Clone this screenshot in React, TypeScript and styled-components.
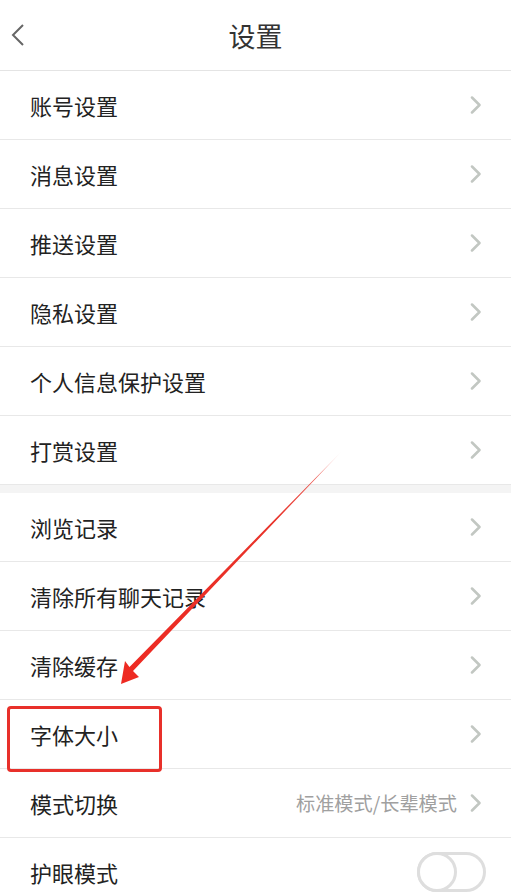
import styled, { createGlobalStyle } from 'styled-components';

const GlobalStyle = createGlobalStyle`
    html, body {
        margin: 0;
        padding: 0;
        background: #fff;
    }
    body {
        font-family: 'Noto Sans CJK SC', 'Noto Sans', sans-serif;
    }
`;

const Page = styled.div`
    position: relative;
    width: 511px;
    min-height: 896px;
    overflow: hidden;
    background: #fff;
`;

const Header = styled.div`
    height: 70px;
    display: flex;
    align-items: center;
    justify-content: center;
    position: relative;
    border-bottom: 1px solid #e4e4e4;
`;

const BackButton = styled.div`
    position: absolute;
    left: 8px;
    top: 21px;
    width: 20px;
    height: 28px;
    display: flex;
    align-items: center;
    justify-content: center;
`;

const HeaderTitleTypo = styled.div`
    color: #333;
    font-size: 27px;
    font-weight: 400;
    line-height: 34px;
    margin-top: 2px;
`;

const Group = styled.div`
    display: flex;
    flex-direction: column;
`;

const GroupGap = styled.div`
    height: 8px;
    background: #f4f4f4;
`;

const Row = styled.div`
    height: 68px;
    display: flex;
    align-items: center;
    justify-content: space-between;
    padding: 0 29px 0 30px;
    border-bottom: 1px solid #e8e8e8;
`;

const RowLabelTypo = styled.div`
    color: #222;
    font-size: 22px;
    font-weight: 400;
    line-height: 30px;
`;

const RowRightWrap = styled.div`
    display: flex;
    align-items: center;
    gap: 13px;
`;

const RowValueTypo = styled.div`
    color: #a0a0a0;
    font-size: 19.2px;
    font-weight: 400;
    line-height: 26px;
`;

const Toggle = styled.div<{ $on: boolean }>`
    width: 69px;
    height: 40px;
    box-sizing: border-box;
    margin-right: -4px;
    border-radius: 20px;
    border: 3px solid #dedede;
    background: ${(props) => (props.$on ? '#4cd964' : '#fff')};
    position: relative;
`;

const ToggleKnob = styled.div<{ $on: boolean }>`
    position: absolute;
    top: -3px;
    left: ${(props) => (props.$on ? '26px' : '-3px')};
    width: 40px;
    height: 40px;
    box-sizing: border-box;
    border-radius: 50%;
    border: 3px solid #dedede;
    background: #fff;
`;

const HighlightBox = styled.div`
    position: absolute;
    left: 7px;
    top: 706px;
    width: 155px;
    height: 66px;
    box-sizing: border-box;
    border: 3px solid #e8302a;
    border-radius: 4px;
    pointer-events: none;
`;

const ArrowLayer = styled.svg`
    position: absolute;
    left: 0;
    top: 0;
    pointer-events: none;
`;

const Chevron = () => (
    <svg width="12" height="18" viewBox="0 0 12 18">
        <path d="M2 1.5 L9.5 9 L2 16.5" fill="none" stroke="#c2c7c2" strokeWidth="2.5" strokeLinecap="round" strokeLinejoin="round" />
    </svg>
);

interface IRow {
    label: string;
    value?: string;
    toggle?: boolean;
}

const groupOne: IRow[] = [
    { label: '账号设置' },
    { label: '消息设置' },
    { label: '推送设置' },
    { label: '隐私设置' },
    { label: '个人信息保护设置' },
    { label: '打赏设置' }
];

const groupTwo: IRow[] = [
    { label: '浏览记录' },
    { label: '清除所有聊天记录' },
    { label: '清除缓存' },
    { label: '字体大小' },
    { label: '模式切换', value: '标准模式/长辈模式' },
    { label: '护眼模式', toggle: false }
];

const SettingRow = ({ item }: { item: IRow }) => (
    <Row>
        <RowLabelTypo>{item.label}</RowLabelTypo>
        {item.toggle !== undefined ? (
            <Toggle $on={item.toggle}>
                <ToggleKnob $on={item.toggle} />
            </Toggle>
        ) : (
            <RowRightWrap>
                {item.value && <RowValueTypo>{item.value}</RowValueTypo>}
                <Chevron />
            </RowRightWrap>
        )}
    </Row>
);

const App = () => {
    return (
        <Page>
            <GlobalStyle />
            <Header>
                <BackButton>
                    <svg width="16" height="24" viewBox="0 0 16 24">
                        <path d="M13 2 L3 12 L13 22" fill="none" stroke="#666" strokeWidth="2" />
                    </svg>
                </BackButton>
                <HeaderTitleTypo>设置</HeaderTitleTypo>
            </Header>
            <Group>
                {groupOne.map((item) => (
                    <SettingRow key={item.label} item={item} />
                ))}
            </Group>
            <GroupGap />
            <Group>
                {groupTwo.map((item) => (
                    <SettingRow key={item.label} item={item} />
                ))}
            </Group>

            {/* annotation overlay */}
            <HighlightBox />
            <ArrowLayer width="511" height="896" viewBox="0 0 511 896">
                <defs>
                    <linearGradient id="arrowFade" x1="343" y1="450" x2="121" y2="684" gradientUnits="userSpaceOnUse">
                        <stop offset="0" stopColor="#e8332a" stopOpacity="0" />
                        <stop offset="0.12" stopColor="#e8332a" stopOpacity="0.8" />
                        <stop offset="0.3" stopColor="#e8332a" stopOpacity="1" />
                        <stop offset="1" stopColor="#ee2a22" stopOpacity="1" />
                    </linearGradient>
                </defs>
                <polygon
                    points="343,450 133,671 139,677 121,684 125,661 129.5,667"
                    fill="url(#arrowFade)"
                />
            </ArrowLayer>
        </Page>
    );
};

export default App;
